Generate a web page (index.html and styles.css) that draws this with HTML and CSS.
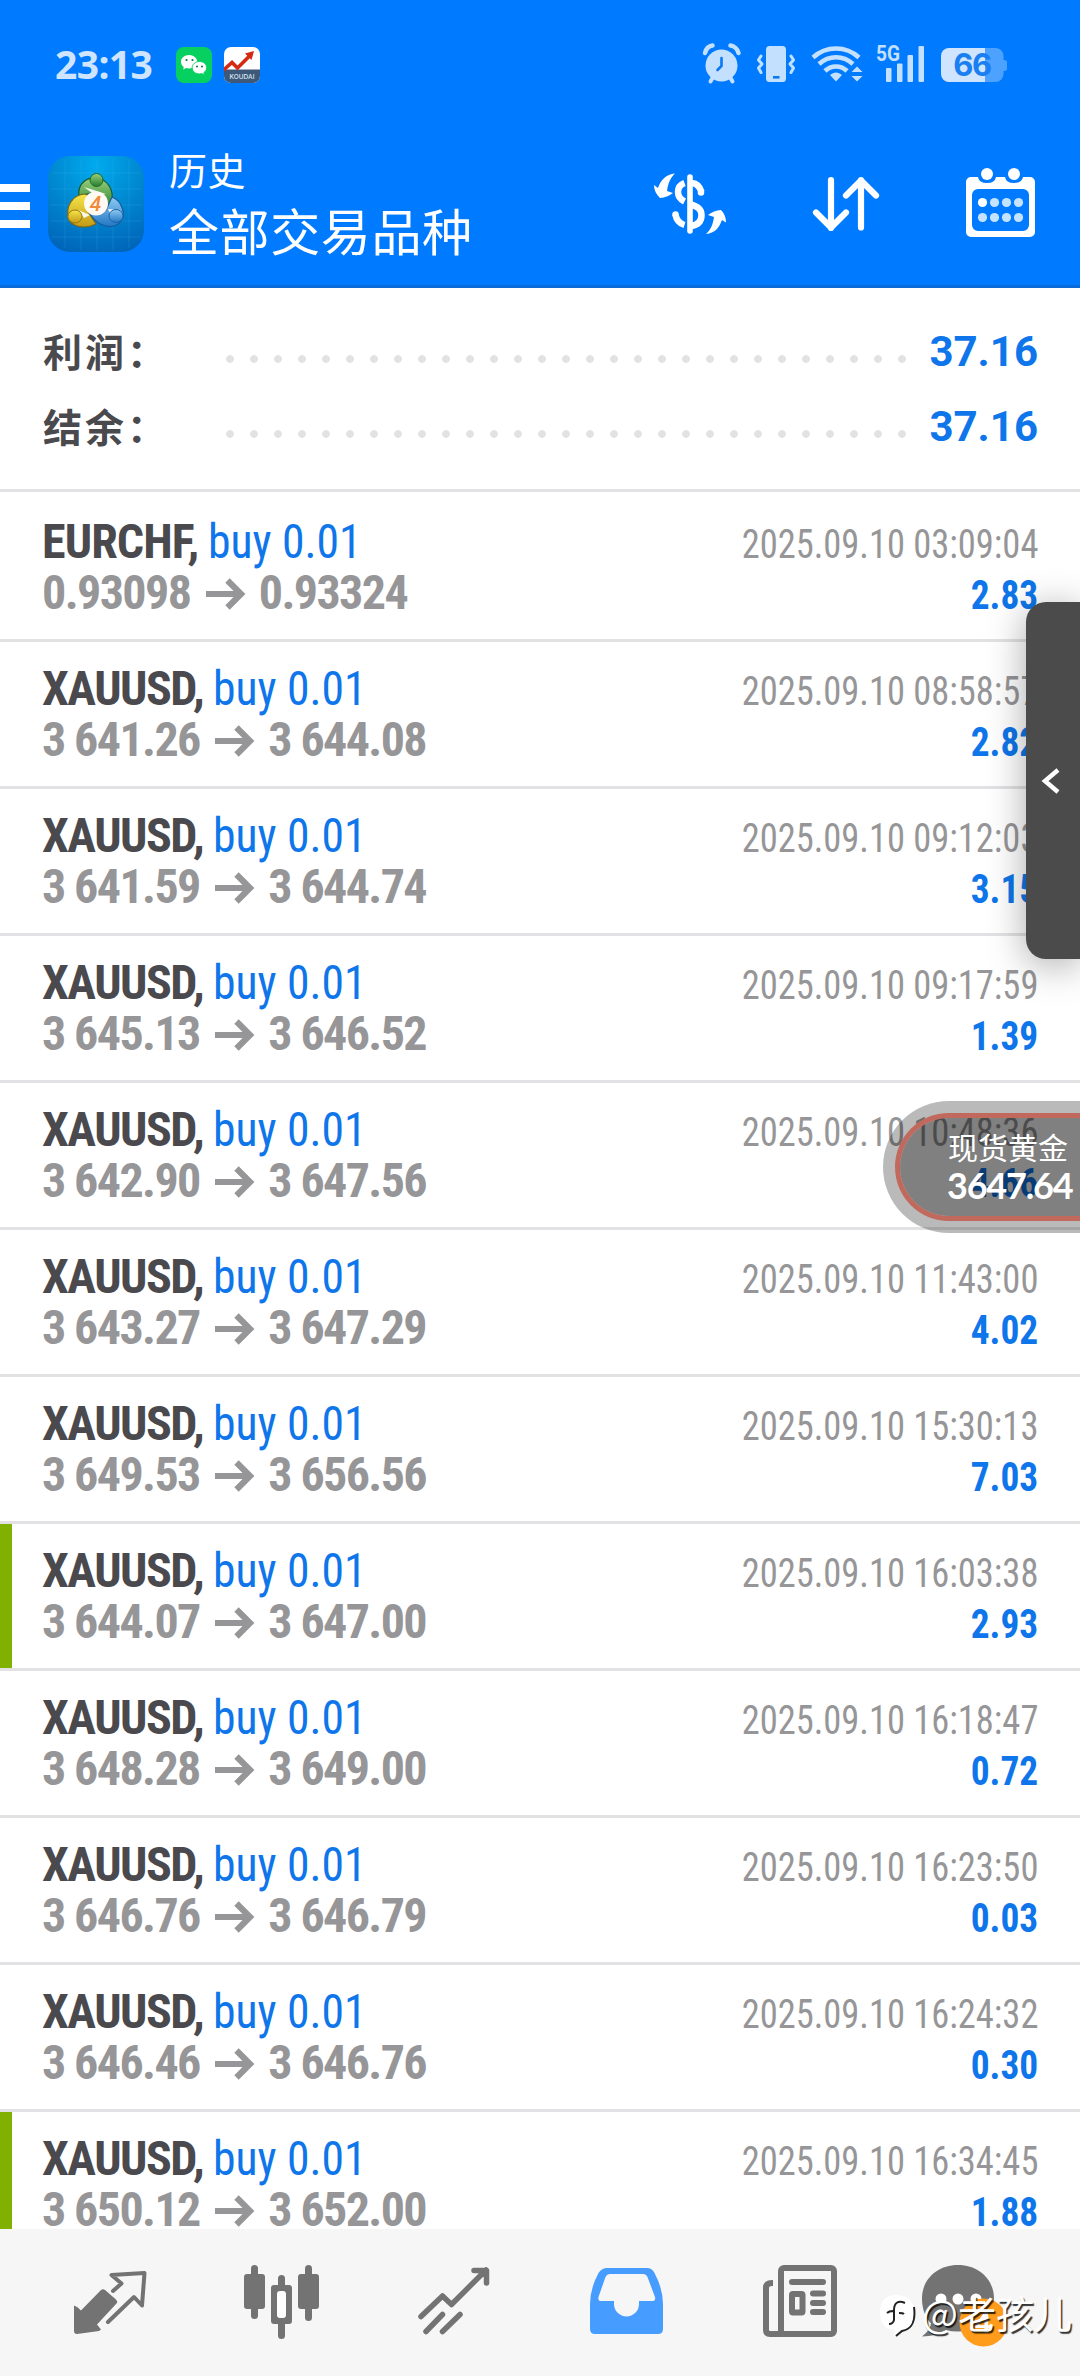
FILE: index.html
```html
<!DOCTYPE html>
<html lang="zh-CN">
<head>
<meta charset="utf-8">
<title>历史</title>
<link rel="stylesheet" href="styles.css">
</head>
<body>
<header class="header">
  <div class="status">
    <span class="clock">23:13</span>
    <svg class="notif" width="36" height="36" viewBox="0 0 36 36">
      <rect width="36" height="36" rx="8" fill="#06d160"/>
      <path d="M13 8c-4.600 0-8 3-8 6.700 0 2.200 1 4 2.800 5.300L7.200 22.500l3-1.500c1 .3 2 .4 3 .4 4.600 0 8-3 8-6.700S17.600 8 13 8z" fill="#fff"/>
      <path d="M23.500 14.500c-4.200 0-7.300 2.700-7.300 6.200s3.100 6.200 7.300 6.200c.8 0 1.600-.1 2.300-.3l2.600 1.300-.6-2.300c1.800-1.200 2.800-2.900 2.800-4.900 0-3.500-3-6.200-7.100-6.200z" fill="#fff" stroke="#06d160" stroke-width=".9"/>
      <g fill="#067a40"><circle cx="10.500" cy="13" r="1.100"/><circle cx="16.500" cy="13" r="1.100"/><circle cx="21" cy="19.500" r="1"/><circle cx="26" cy="19.500" r="1"/></g>
    </svg>
    <svg class="notif" width="36" height="36" viewBox="0 0 36 36">
      <defs><clipPath id="kd"><rect width="36" height="36" rx="7"/></clipPath></defs>
      <g clip-path="url(#kd)">
        <rect width="36" height="36" fill="#fff"/>
        <rect y="22.500" width="36" height="14" fill="#3d5878"/>
        <path d="M-1 23.500 8 15.500l5.500 5.500L26 8.500" fill="none" stroke="#d42a14" stroke-width="3.600"/>
        <path d="M21 6.500 30 4l-2.500 9z" fill="#d42a14"/>
        <text class="koudai" x="18" y="32" text-anchor="middle">KOUDAI</text>
      </g>
    </svg>
    <span class="spacer"></span>
    <svg width="320" height="44" viewBox="700 42 320 44" fill="#c4e0ff">
      <circle cx="721.500" cy="65.500" r="16"/>
      <path d="M705 53c1-4 4-7 7.500-7.500M730.500 45.500c3.500.5 7 3.500 8 7.500" fill="none" stroke="#c4e0ff" stroke-width="4.500" stroke-linecap="round"/>
      <path d="M713 77l-2.500 4.500M730 77l2.500 4.500" stroke="#c4e0ff" stroke-width="4" stroke-linecap="round"/>
      <path d="M721.500 58v8l-4 4" fill="none" stroke="#0b79f5" stroke-width="2.600" stroke-linecap="round"/>
      <rect x="766" y="46" width="20" height="36" rx="3.500"/>
      <rect x="773" y="76" width="6.500" height="2.600" fill="#0b79f5"/>
      <path d="M761 56l-2.500 4 3.500 4-3.500 4 2.500 4.500M791 56l2.500 4-3.500 4 3.500 4-2.500 4.500" fill="none" stroke="#c4e0ff" stroke-width="3" stroke-linecap="round" stroke-linejoin="round"/>
      <g fill="none" stroke="#c4e0ff" stroke-width="4.600"><path d="M813 57.500c13-12 33-12 46 0"/><path d="M819 64c10-9 24-9 34 0"/><path d="M825 71c6-6 16-6 22 0"/></g>
      <path d="M830 75c4-3.500 8-3.500 12 0l-6 6.500z"/>
      <path d="M851.500 72l5.500-5.500 5.500 5.500zM851.500 76l5.500 5.500 5.500-5.500z"/>
      <text class="net" x="876" y="61" textLength="24" lengthAdjust="spacingAndGlyphs">5G</text>
      <rect x="886" y="68" width="5.500" height="14" rx="1"/><rect x="897" y="63.500" width="5.500" height="18.500" rx="1"/><rect x="907.500" y="55" width="5.500" height="27" rx="1"/><rect x="918.500" y="46" width="5.500" height="36" rx="1"/>
      <path d="M949 48h36v34h-36a8 8 0 0 1-8-8V56a8 8 0 0 1 8-8z" fill="#cfe5ff"/>
      <path d="M985 48h10.500a8 8 0 0 1 8 8v4h1a2.500 2.500 0 0 1 2.500 2.500v6a2.500 2.500 0 0 1-2.500 2.500h-1v3a8 8 0 0 1-8 8H985z" fill="#4da1ff"/>
      <text class="battery" x="972" y="76" text-anchor="middle">66</text>
    </svg>
  </div>
  <div class="appbar">
    <svg width="30" height="157" viewBox="0 128 30 157" fill="#fff"><rect y="184" width="30" height="8"/><rect y="202" width="30" height="8"/><rect y="220" width="30" height="8"/></svg>
    <svg class="logo" width="96" height="96" viewBox="0 0 96 96">
      <defs>
        <radialGradient id="bg" cx=".5" cy=".1" r=".95"><stop offset="0" stop-color="#00aaee"/><stop offset=".5" stop-color="#0088d0"/><stop offset="1" stop-color="#0064b8"/></radialGradient>
        <linearGradient id="gr" x2="0" y2="1"><stop offset="0" stop-color="#9ad07c"/><stop offset="1" stop-color="#237d2d"/></linearGradient>
        <linearGradient id="ye" x2="0" y2="1"><stop offset="0" stop-color="#f6e64a"/><stop offset="1" stop-color="#c59a16"/></linearGradient>
        <linearGradient id="bl" x2="0" y2="1"><stop offset="0" stop-color="#8fcbf2"/><stop offset="1" stop-color="#2377c4"/></linearGradient>
      </defs>
      <rect width="96" height="96" rx="22" fill="url(#bg)"/>
      <path d="M17 4v88M33 2v92M49 2v92M65 2v92M81 4v88M4 17h88M2 33h92M2 49h92M2 65h92M4 81h88" stroke="#4cc3f5" stroke-opacity=".18"/>
      <path d="M31 40C29 27 40 21 48 22c11 1 18 11 16 24-1 4-2 6-4 8L48 36z" fill="url(#gr)" stroke="#155d2c" stroke-width="1.200"/>
      <path d="M20 62c-2-12 4-23 17-24l4 2-2 14 9 14c-10 5-24 4-28-6z" fill="url(#ye)" stroke="#7b6915" stroke-width="1.200"/>
      <path d="M64 41c10 4 14 17 9 24-7 9-22 7-31-7l16-4z" fill="url(#bl)" stroke="#165c9e" stroke-width="1.200"/>
      <path d="M36 31l13 4 9 3-10 2zM60 53l13 1-8 9zM30 54l6 8 6-3z" fill="#fff" fill-opacity=".9"/>
      <circle cx="48.500" cy="24" r="6.500" fill="url(#gr)" stroke="#1c6b2a"/>
      <ellipse cx="27" cy="60.500" rx="7" ry="6.500" fill="url(#ye)" stroke="#957a12"/>
      <ellipse cx="68" cy="60" rx="7" ry="6.500" fill="url(#bl)" stroke="#1b63a8"/>
      <circle cx="48" cy="47.500" r="12" fill="#fffaf2"/>
      <text class="logo-num" x="47.500" y="55" text-anchor="middle">4</text>
    </svg>
    <div class="titles">
      <div class="sub">历史</div>
      <div class="title">全部交易品种</div>
    </div>
    <svg class="tools" width="400" height="157" viewBox="640 128 400 157" fill="none" stroke="#fff">
      <path d="M684.500 183c-4 1.500-6.500 5-6.500 9s2.500 7.500 6.500 9.500M675.500 214.500c1 6 4 9 9 10.500" stroke-width="6.500"/>
      <path d="M675.500 214.500v.1M701 192.500v-.1" stroke-width="6.500" stroke-linecap="round"/>
      <path d="M692 183c5 .5 8 4 9.500 9M690 204.500c7 1.500 11.500 4 11.500 10.500s-4 10-10 11" stroke-width="6.500"/>
      <path d="M690 177v54" stroke-width="5.600" stroke-linecap="round"/>
      <path d="M675 173.500c-9 1-14 6-17 14.500l-4-3c0 5 2 9 6 13 5-.5 9-2 13-5l-6-2c1-7 3-13 8-17.500zM706 234c9-1 13-6 16-14l4 2.500c0-5-1.500-9-5-12.500-5 .5-9 2-13 5l6 2c-1 7-3 12.500-8 17z" fill="#fff" stroke="none"/>
      <g stroke-width="6.200" stroke-linecap="round" stroke-linejoin="round"><path d="M831 180v48M816 212.500l15 15 15-15M861 227.500V180M846 195.500l15-15 15 15"/></g>
      <path d="M971 177h59a5 5 0 0 1 5 5v50a5 5 0 0 1-5 5h-59a5 5 0 0 1-5-5v-50a5 5 0 0 1 5-5zm7 12a6 6 0 0 0-6 6v30a6 6 0 0 0 6 6h45a6 6 0 0 0 6-6v-30a6 6 0 0 0-6-6z" fill="#fff" fill-rule="evenodd" stroke="none"/>
      <path d="M978 174v3q1 6 9 6t9-6v-3zM1005 174v3q1 6 9 6t9-6v-3z" fill="#007aff" stroke="none"/>
      <g fill="#fff" stroke="none"><circle cx="987" cy="174" r="6"/><circle cx="1014" cy="174" r="6"/></g>
      <g fill="#c4e3ff" stroke="none"><circle cx="982.500" cy="202.500" r="4.600" fill="#fff"/><circle cx="994.500" cy="202.500" r="4.600"/><circle cx="1006.500" cy="202.500" r="4.600"/><circle cx="1018.500" cy="202.500" r="4.600"/><circle cx="982.500" cy="217.500" r="4.600"/><circle cx="994.500" cy="217.500" r="4.600"/><circle cx="1006.500" cy="217.500" r="4.600"/><circle cx="1018.500" cy="217.500" r="4.600"/></g>
    </svg>
  </div>
</header>

<section class="summary">
  <div class="sum-row"><span class="sum-label">利润：</span><span class="dots"></span><span class="sum-value">37.16</span></div>
  <div class="sum-row"><span class="sum-label">结余：</span><span class="dots"></span><span class="sum-value">37.16</span></div>
</section>

<svg class="defs" width="0" height="0"><defs><symbol id="arrow" viewBox="0 0 40 32"><path d="M0 16h35M21.500 2.500 35 16 21.500 29.500" fill="none" stroke="#969698" stroke-width="6.200"/></symbol></defs></svg>

<main class="list">
  <article class="deal"><div class="line"><span class="what"><b class="sym wide">EURCHF,</b><span class="side">buy 0.01</span></span><time>2025.09.10 03:09:04</time></div><div class="line"><span class="price">0.93098<svg class="arrow"><use href="#arrow"/></svg>0.93324</span><span class="profit">2.83</span></div></article>
  <article class="deal"><div class="line"><span class="what"><b class="sym">XAUUSD,</b><span class="side">buy 0.01</span></span><time>2025.09.10 08:58:57</time></div><div class="line"><span class="price">3 641.26<svg class="arrow"><use href="#arrow"/></svg>3 644.08</span><span class="profit">2.82</span></div></article>
  <article class="deal"><div class="line"><span class="what"><b class="sym">XAUUSD,</b><span class="side">buy 0.01</span></span><time>2025.09.10 09:12:03</time></div><div class="line"><span class="price">3 641.59<svg class="arrow"><use href="#arrow"/></svg>3 644.74</span><span class="profit">3.15</span></div></article>
  <article class="deal"><div class="line"><span class="what"><b class="sym">XAUUSD,</b><span class="side">buy 0.01</span></span><time>2025.09.10 09:17:59</time></div><div class="line"><span class="price">3 645.13<svg class="arrow"><use href="#arrow"/></svg>3 646.52</span><span class="profit">1.39</span></div></article>
  <article class="deal"><div class="line"><span class="what"><b class="sym">XAUUSD,</b><span class="side">buy 0.01</span></span><time>2025.09.10 10:48:36</time></div><div class="line"><span class="price">3 642.90<svg class="arrow"><use href="#arrow"/></svg>3 647.56</span><span class="profit">4.66</span></div></article>
  <article class="deal"><div class="line"><span class="what"><b class="sym">XAUUSD,</b><span class="side">buy 0.01</span></span><time>2025.09.10 11:43:00</time></div><div class="line"><span class="price">3 643.27<svg class="arrow"><use href="#arrow"/></svg>3 647.29</span><span class="profit">4.02</span></div></article>
  <article class="deal"><div class="line"><span class="what"><b class="sym">XAUUSD,</b><span class="side">buy 0.01</span></span><time>2025.09.10 15:30:13</time></div><div class="line"><span class="price">3 649.53<svg class="arrow"><use href="#arrow"/></svg>3 656.56</span><span class="profit">7.03</span></div></article>
  <article class="deal tp"><div class="line"><span class="what"><b class="sym">XAUUSD,</b><span class="side">buy 0.01</span></span><time>2025.09.10 16:03:38</time></div><div class="line"><span class="price">3 644.07<svg class="arrow"><use href="#arrow"/></svg>3 647.00</span><span class="profit">2.93</span></div></article>
  <article class="deal"><div class="line"><span class="what"><b class="sym">XAUUSD,</b><span class="side">buy 0.01</span></span><time>2025.09.10 16:18:47</time></div><div class="line"><span class="price">3 648.28<svg class="arrow"><use href="#arrow"/></svg>3 649.00</span><span class="profit">0.72</span></div></article>
  <article class="deal"><div class="line"><span class="what"><b class="sym">XAUUSD,</b><span class="side">buy 0.01</span></span><time>2025.09.10 16:23:50</time></div><div class="line"><span class="price">3 646.76<svg class="arrow"><use href="#arrow"/></svg>3 646.79</span><span class="profit">0.03</span></div></article>
  <article class="deal"><div class="line"><span class="what"><b class="sym">XAUUSD,</b><span class="side">buy 0.01</span></span><time>2025.09.10 16:24:32</time></div><div class="line"><span class="price">3 646.46<svg class="arrow"><use href="#arrow"/></svg>3 646.76</span><span class="profit">0.30</span></div></article>
  <article class="deal tp"><div class="line"><span class="what"><b class="sym">XAUUSD,</b><span class="side">buy 0.01</span></span><time>2025.09.10 16:34:45</time></div><div class="line"><span class="price">3 650.12<svg class="arrow"><use href="#arrow"/></svg>3 652.00</span><span class="profit">1.88</span></div></article>
</main>

<nav class="tabs">
  <svg viewBox="21 2229 173 147"><path d="M74 2305.500q3.500 1 7 5l20-20.500q2-1.500 4 0l11 9.500q2 2 .5 4L97 2324.500l4 5-2 1.500-22 3q-3 0-3-3z" fill="#737373"/><path d="M113 2291l8.500-7.500-10-8.500 33-2-2.500 32.500-8-8.500-26 25" fill="none" stroke="#737373" stroke-width="4" stroke-linejoin="round" stroke-linecap="round"/></svg>
  <svg viewBox="194 2229 173 147" fill="#737373"><rect x="244" y="2274" width="21" height="35" rx="3"/><rect x="251" y="2265" width="7" height="54" rx="3.500"/><rect x="298" y="2274" width="21" height="35" rx="3"/><rect x="305" y="2265" width="7" height="56" rx="3.500"/><rect x="278" y="2275" width="7" height="64" rx="3.500"/><rect x="271" y="2285" width="21" height="39" rx="3"/><rect x="277" y="2291" width="9" height="27" rx="3" fill="#fff"/></svg>
  <svg viewBox="367 2229 173 147" fill="none" stroke="#737373" stroke-width="5.500" stroke-linecap="round" stroke-linejoin="round"><path d="M421 2316.500l21.500-20.500 9 8.500 34.500-34.500M474 2270.500h12.500V2283M426 2331.500l16.500-17M442.500 2331.500l17.500-17"/></svg>
  <svg viewBox="540 2229 173 147"><path d="M607 2268h40q5 0 7.500 5 8.500 16 8.500 31v25q0 5-5 5h-63q-5 0-5-5v-25q0-15 8.500-31 3.500-5 8.500-5zm3 6q-3 0-4.500 3l-7 20q-1 4 3 4h12.500v3a12.500 12.500 0 0 0 25 0v-3H652q4 0 3-4l-7.500-20q-1.500-3-4.500-3z" fill="#469dff" fill-rule="evenodd"/></svg>
  <svg viewBox="713 2229 173 147" fill="none" stroke="#737373"><rect x="781" y="2268" width="53" height="66" rx="3" stroke-width="6"/><path d="M773 2283h-1q-6 0-6 5v42q0 4 4 4h14" stroke-width="6"/><path d="M792 2282h31M813 2293.500h10M813 2303h10M813 2312h10" stroke-width="6" stroke-linecap="round"/><rect x="792" y="2294" width="10.500" height="18.500" rx="1" stroke-width="6"/></svg>
  <svg viewBox="886 2229 173 147"><path d="M958 2265c21 0 36 14.500 36 33.500s-15 33-36 33q-7 0-12-1.500-10 6.500-24 6.500 8-6 9-13c-6-6-9-15-9-25 0-19 15-33.500 36-33.500z" fill="#737373"/><g fill="#fff"><circle cx="941" cy="2299" r="5.500"/><circle cx="958" cy="2299" r="5.500"/><circle cx="976" cy="2299" r="5.500"/></g><circle cx="983.500" cy="2322.500" r="24" fill="#ff9c1c"/><text class="badge" x="983" y="2333" text-anchor="middle">4</text></svg>
</nav>

<div class="drawer"><svg width="19" height="26" viewBox="0 0 19 26"><path d="M17 2 4 13l13 11" fill="none" stroke="#fff" stroke-width="4.500"/></svg></div>
<div class="quote"><div class="quote-in"><span class="q-name">现货黄金</span><span class="q-price">3647.64</span></div></div>
<div class="mark">
  <svg width="37" height="46" viewBox="0 0 37 46"><path d="M17 2c12 0 18 6 18 17 0 13-5 17-13 18l-8 7 2-7C5 36 1 30 1 19 1 8 6 2 17 2z" fill="#fff"/><path d="M35 14c2 15-2 22-12 24l-6 5" fill="none" stroke="#222" stroke-width="2"/><path d="M26 10c-7-3-11 0-11 7v10q-1 4-5 4M8 20q2-2 6-2M20 20q4 0 5 1" fill="none" stroke="#222" stroke-width="2"/></svg>
  <span>@老孩儿</span>
</div>
</body>
</html>
```
FILE: styles.css
```css
* { box-sizing: border-box; }

body {
  position: relative;
  display: flex;
  flex-direction: column;
  width: 1080px;
  height: 2376px;
  margin: 0;
  overflow: hidden;
  background: #fff;
  font-family: "Roboto Condensed", Roboto, "Noto Sans CJK SC", sans-serif;
}

svg { display: block; flex: none; }
.defs { position: absolute; }

.header {
  height: 288px;
  flex: none;
  background: #007aff;
  border-bottom: 3px solid #0a6ad6;
}

.status {
  display: flex;
  align-items: center;
  height: 128px;
  padding: 0 60px 0 55px;
}
.clock {
  width: 121px;
  color: #cfe5ff;
  font: 700 39px/40px "Noto Sans", sans-serif;
  letter-spacing: -.6px;
}
.notif { margin: 2px 12px 0 0; }
.spacer { flex: 1; }
.koudai { fill: #dfe8f2; font: 500 6.500px Inter, sans-serif; }
.net { font: 700 22px Roboto, sans-serif; }
.battery { fill: #1a7ff0; font: 700 31px Inter, sans-serif; letter-spacing: -1.500px; }

.appbar { display: flex; height: 157px; }
.logo { margin: 27.500px 25px 0 18px; }
.logo-num { fill: #f08a3c; font: italic 500 21px Roboto, sans-serif; }
.titles {
  flex: 1;
  padding-top: 19px;
  color: #fff;
  font-family: "Noto Sans CJK SC", sans-serif;
  font-weight: 400;
  white-space: nowrap;
}
.sub { font-size: 38px; line-height: 44px; letter-spacing: .5px; }
.title { margin-top: 8px; font-size: 50px; line-height: 60px; letter-spacing: .6px; }
.tools { margin-right: 40px; }

.summary {
  height: 204px;
  flex: none;
  padding: 26px 42px 0 43px;
  border-bottom: 3px solid #e2e2e4;
}
.sum-row { display: flex; height: 75px; line-height: 75px; }
.sum-label {
  width: 175px;
  color: #4a4a4e;
  font-family: "Noto Sans CJK SC", sans-serif;
  font-size: 39px;
  font-weight: 700;
  line-height: 72px;
  letter-spacing: 3px;
}
.dots {
  width: 696px;
  height: 24px;
  margin-top: 33px;
  background: radial-gradient(circle, #e2e2e4 3.500px, transparent 4.200px) 0 0 / 24px 24px;
}
.sum-value {
  flex: 1;
  color: #0e76ea;
  font-family: Roboto, sans-serif;
  font-size: 42px;
  font-weight: 700;
  text-align: right;
}

.list { flex: 1; min-height: 0; padding-top: 3px; overflow: hidden; }
.deal {
  height: 147px;
  padding: 21px 42px 0 42px;
  border-bottom: 3px solid #e2e2e4;
}
.deal.tp { background: linear-gradient(#80b000, #80b000) 0 0 / 12px 144px no-repeat; }
.line {
  display: flex;
  justify-content: space-between;
  align-items: baseline;
  height: 51px;
  line-height: 51px;
  white-space: pre;
}
.sym { margin-right: 10px; color: #4a4a4e; font-size: 48px; font-weight: 700; letter-spacing: -1.500px; }
.sym.wide { letter-spacing: -.9px; }
.side {
  display: inline-block;
  color: #0e76ea;
  font-size: 48px;
  transform: scaleX(.95);
  transform-origin: left;
}
time {
  color: #969698;
  font-size: 40px;
  transform: scaleX(.912);
  transform-origin: right;
}
.price { color: #969698; font-size: 48px; font-weight: 700; letter-spacing: -1.600px; }
.arrow { display: inline-block; width: 40px; height: 32px; margin: 0 13px 0 15.500px; vertical-align: -1px; }
.profit {
  color: #0e76ea;
  font-size: 40px;
  font-weight: 700;
  transform: scaleX(.935);
  transform-origin: right;
}

.tabs {
  display: flex;
  height: 147px;
  flex: none;
  padding-left: 21px;
  background: #f6f6f6;
}
.tabs svg { width: 173px; height: 147px; }
.badge { fill: #fff; font: 500 30px Roboto, sans-serif; }

.drawer {
  position: absolute;
  top: 602px;
  right: 0;
  display: flex;
  align-items: center;
  width: 54px;
  height: 357px;
  padding-left: 15px;
  border-radius: 20px 0 0 20px;
  background: #4b4b4b;
  box-shadow: 0 6px 38px rgba(0, 0, 0, .34);
}

.quote {
  position: absolute;
  top: 1101px;
  left: 883px;
  width: 197px;
  height: 132px;
  padding: 12px 0 12px 12px;
  border-radius: 66px 0 0 66px;
  background: rgba(0, 0, 0, .27);
}
.quote-in {
  display: flex;
  flex-direction: column;
  height: 108px;
  padding: 8px 0 0 48px;
  border: 5px solid #c0695c;
  border-right: 0;
  border-radius: 54px 0 0 54px;
  background: rgba(0, 0, 0, .31);
  background-clip: padding-box;
  color: #fff;
}
.q-name { font: 400 30px/40px "Noto Sans CJK SC", sans-serif; }
.q-price { margin-left: -1px; font: 700 36px/38px Lato, sans-serif; letter-spacing: -1.200px; }

.mark {
  position: absolute;
  top: 2293px;
  left: 879px;
  display: flex;
  gap: 6px;
  color: #fff;
  font: 400 38px/38px "Noto Sans CJK SC", sans-serif;
  text-shadow: 1.500px 1.500px 1px rgba(0, 0, 0, .8);
  white-space: nowrap;
}
```
